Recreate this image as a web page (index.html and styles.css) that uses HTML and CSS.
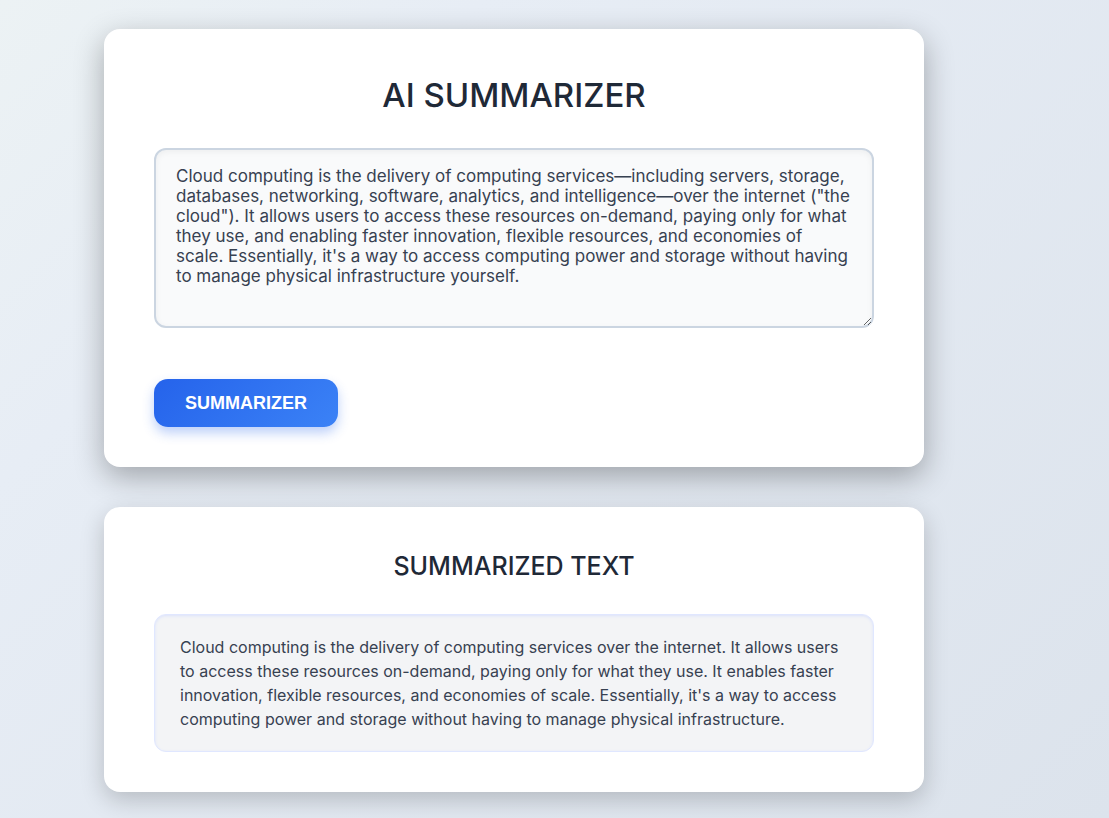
FILE: index.html
```html
<!DOCTYPE html>
<html lang="en">
<head>
<meta charset="utf-8">
<meta name="viewport" content="width=device-width, initial-scale=1">
<title>AI Summarizer</title>
<link rel="stylesheet" href="styles.css">
</head>
<body>
<main class="page">
  <form class="card card-input">
    <h1 class="title" id="title">AI SUMMARIZER</h1>
    <textarea class="source" aria-labelledby="title" spellcheck="false">Cloud computing is the delivery of computing services—including servers, storage, databases, networking, software, analytics, and intelligence—over the internet ("the cloud"). It allows users to access these resources on-demand, paying only for what they use, and enabling faster innovation, flexible resources, and economies of scale. Essentially, it's a way to access computing power and storage without having to manage physical infrastructure yourself.</textarea>
    <button class="submit" type="button">SUMMARIZER</button>
  </form>
  <section class="card card-result">
    <h2 class="subtitle">SUMMARIZED TEXT</h2>
    <p class="summary">Cloud computing is the delivery of computing services over the internet. It allows users to access these resources on-demand, paying only for what they use. It enables faster innovation, flexible resources, and economies of scale. Essentially, it's a way to access computing power and storage without having to manage physical infrastructure.</p>
  </section>
</main>
</body>
</html>
```
FILE: styles.css
```css
* {
  box-sizing: border-box;
}

body {
  margin: 0;
  min-height: 100vh;
  background: linear-gradient(135deg, #ecf2f4, #e7edf5 25%, #dce3ec);
  font-family: Inter, "Liberation Sans", sans-serif;
  color: #1f2937;
}

.page {
  display: flex;
  flex-direction: column;
  gap: 40px;
  max-width: 924px;
  padding: 29px 0 26px 104px;
}

.card {
  padding: 40px 50px;
  border-radius: 16px;
  background: #fff;
}

.card-input {
  display: flex;
  flex-direction: column;
  align-items: flex-start;
  box-shadow: 0 10px 30px rgba(0, 0, 0, 0.3);
}

.card-result {
  box-shadow: 0 8px 24px rgba(0, 0, 0, 0.2);
}

.title,
.subtitle {
  width: 100%;
  margin: 0;
  font-weight: 500;
  text-align: center;
}

.title {
  margin: 6px 0 32px;
  font-size: 33px;
  line-height: 41px;
}

.source {
  width: 100%;
  height: 180px;
  margin-bottom: 51px;
  padding: 16px 20px;
  border: 2px solid #cbd5e1;
  border-radius: 12px;
  background: #f9fafb;
  box-shadow: inset 0 2px 6px rgba(0, 0, 0, 0.05);
  color: #374151;
  font: 400 17px/20px Inter, "Liberation Sans", sans-serif;
  resize: vertical;
}

.submit {
  height: 48px;
  padding: 0 31px;
  border: 0;
  border-radius: 14px;
  background: linear-gradient(135deg, #2563eb, #3b82f6);
  box-shadow: 0 6px 12px rgba(37, 99, 235, 0.3);
  color: #fff;
  font: 700 18px/20px "Liberation Sans", Arial, sans-serif;
  cursor: pointer;
}

.subtitle {
  margin: 4px 0 32px;
  font-size: 25px;
  line-height: 31px;
}

.summary {
  margin: 0;
  padding: 20px 25px;
  border: 1px solid #e0e7ff;
  border-radius: 12px;
  background: #f3f4f6;
  box-shadow: inset 0 1px 3px #dbe2fb;
  color: #374151;
  font-size: 16px;
  line-height: 24px;
}
```
